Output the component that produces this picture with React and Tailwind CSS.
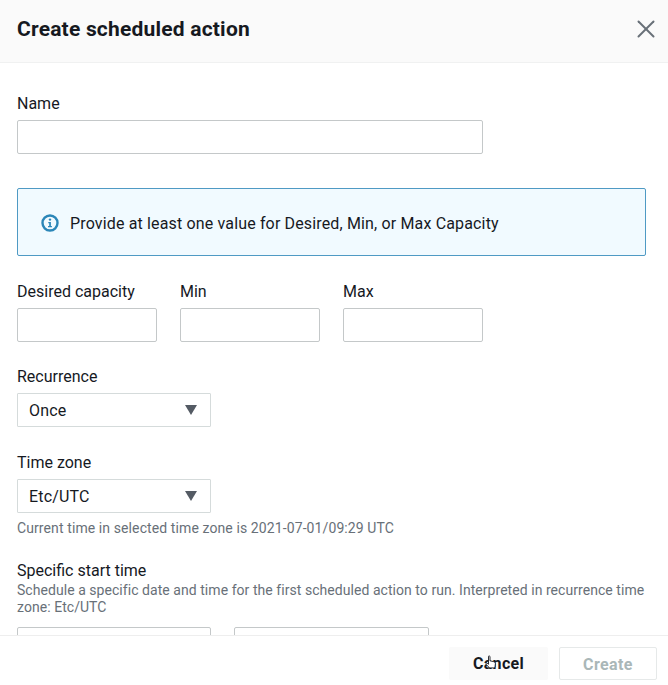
import React from 'react';
import { X } from 'lucide-react';

const font = { fontFamily: 'Roboto, sans-serif' };

function Field({ label, className = '', children }) {
  return (
    <div className={className}>
      <label className="block text-[16px] leading-[20px] text-[#16191f] pt-[1px] mb-[6px]">{label}</label>
      {children}
    </div>
  );
}

function TextInput({ className = '' }) {
  return <div className={`h-[34px] bg-white border border-[#c4c8c9] rounded-[2px] ${className}`} />;
}

function Select({ value }) {
  return (
    <div className="w-[194px] h-[34px] bg-white border border-[#d5dbdb] rounded-[1px] flex items-center justify-between pl-[11px] pr-[13px] text-[16px] tracking-[0.15px] text-[#16191f]">
      <span className="pt-[2px]">{value}</span>
      <svg width="12" height="10" viewBox="0 0 12 10">
        <path d="M0 0h12L6 10z" fill="#545b64" />
      </svg>
    </div>
  );
}

export default function App() {
  return (
    <div className="w-[668px] h-[685px] bg-white flex flex-col overflow-hidden" style={font}>
      {/* Header */}
      <div className="h-[63px] shrink-0 bg-[#fafafa] border-b border-[#f0f1f1] flex items-center justify-between pl-[17px] pr-[7px] pb-[3px]">
        <h1 className="text-[21px] font-bold text-[#16191f] tracking-[0.2px]">Create scheduled action</h1>
        <X size={30} strokeWidth={1.6} className="text-[#687078] mb-[2px]" />
      </div>

      {/* Body */}
      <div className="flex-1 min-h-0 overflow-hidden pl-[17px] pr-[22px] pt-[30px]">
        <Field label="Name">
          <TextInput className="w-[466px]" />
        </Field>

        <div className="mt-[34px] h-[68px] border border-[#4f9ac4] rounded-[2px] bg-[#f1faff] flex items-center pl-[23px] gap-[11px] text-[16px] tracking-[0.15px] text-[#16191f]">
          <svg className="mt-[2px]" width="18" height="18" viewBox="0 0 18 18">
            <circle cx="9" cy="9" r="7.5" fill="none" stroke="#2b86b8" strokeWidth="2.4" />
            <circle cx="9" cy="5.6" r="1.2" fill="#2b86b8" />
            <path d="M7.3 8h2.6v4h1v1.3H7v-1.3h1.2V9.2h-.9z" fill="#2b86b8" />
          </svg>
          <span className="pt-[3px]">Provide at least one value for Desired, Min, or Max Capacity</span>
        </div>

        <div className="mt-[25px] flex gap-[23px]">
          <Field label="Desired capacity"><TextInput className="w-[140px]" /></Field>
          <Field label="Min"><TextInput className="w-[140px]" /></Field>
          <Field label="Max"><TextInput className="w-[140px]" /></Field>
        </div>

        <Field label="Recurrence" className="mt-[24px]">
          <Select value="Once" />
        </Field>

        <Field label="Time zone" className="mt-[25px]">
          <Select value="Etc/UTC" />
        </Field>
        <p className="mt-[6px] text-[14px] leading-[18px] tracking-[0.1px] text-[#687078]">
          Current time in selected time zone is 2021-07-01/09:29 UTC
        </p>

        <div className="mt-[24px]">
          <div className="text-[16px] leading-[20px] text-[#16191f]">Specific start time</div>
          <p className="mt-[1px] text-[14px] leading-[17px] tracking-[0.05px] text-[#687078]">
            Schedule a specific date and time for the first scheduled action to run. Interpreted in recurrence time zone: Etc/UTC
          </p>
          <div className="mt-[11px] flex gap-[23px]">
            <TextInput className="w-[194px]" />
            <TextInput className="w-[195px]" />
          </div>
        </div>
      </div>

      {/* Footer */}
      <div className="h-[50px] shrink-0 bg-white border-t border-[#eeeeee] flex items-start justify-end gap-[11px] pt-[11px] pr-[11px]">
        <button className="relative w-[99px] h-[33px] bg-[#fafafa] rounded-[2px] pt-[1px] text-[16px] tracking-[0.3px] font-bold text-[#16191f]">
          Cancel
          {/* mouse pointer over the button */}
          <svg className="absolute left-[36px] top-[8px]" width="12" height="15" viewBox="0 0 12 15">
            <path d="M3.5 1.2c.6-.6 1.5-.2 1.5.6v4l3.8.9c1 .3 1.6 1 1.6 2l-.4 3.2c-.1.6-.5 1-1.1 1H5c-.4 0-.7-.2-1-.5L1 9.2c-.5-.7.4-1.5 1.1-1l1.4 1V1.8z" fill="#ffffff" stroke="#16191f" strokeWidth="0.9" />
          </svg>
        </button>
        <button className="w-[98px] h-[33px] bg-white border border-[#e6e9e9] rounded-[2px] pt-[2px] text-[16px] tracking-[0.4px] font-bold text-[#aab7b8]">
          Create
        </button>
      </div>
    </div>
  );
}
